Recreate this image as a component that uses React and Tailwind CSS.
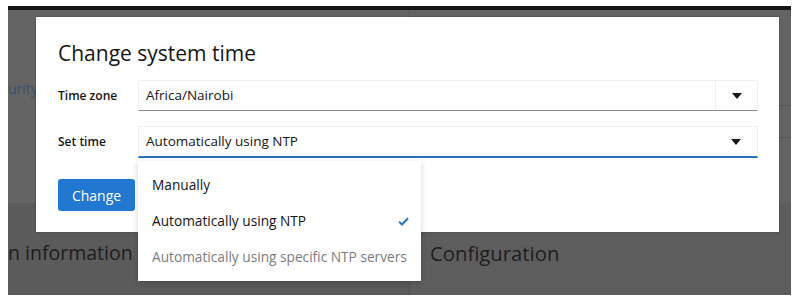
import React from "react";

const Caret = () => (
  <svg width="10" height="6" viewBox="0 0 10 6" className="block">
    <path d="M0 0 L10 0 L5 6 Z" fill="#151515" />
  </svg>
);

const Check = () => (
  <svg width="11" height="9" viewBox="0 0 11 9" className="block">
    <path d="M1 4.6 L4 7.5 L10 1.2" fill="none" stroke="#2b74c9" strokeWidth="2" />
  </svg>
);

export default function App() {
  const font = { fontFamily: '"Open Sans", "Noto Sans", sans-serif' };
  return (
    <div className="w-[799px] h-[300px] bg-white pt-[6px] pl-[8px]" style={font}>
      <div className="relative w-[783px] h-[289px] bg-[#606060] overflow-hidden flex flex-col">
        {/* top black bar */}
        <div className="h-[4px] bg-[#151515] shrink-0" />
        {/* background page content */}
        <div className="flex h-[193px] shrink-0">
          <div className="w-[400px] bg-[#646464] pt-[68px]">
            <div className="text-[14px] text-[#3a4f6b] whitespace-nowrap">urity</div>
          </div>
          <div className="w-[2px] bg-[#5e5e5e]" />
          <div className="flex-1 bg-[#636363] flex flex-col">
            <div className="h-[96px] border-b border-[#575757]" />
            <div className="h-[32px] border-b border-[#575757]" />
            <div className="flex-1" />
          </div>
        </div>
        <div className="flex flex-1 bg-[#5b5b5b]">
          <div className="w-[400px] pt-[38px]">
            <div className="text-[19.5px] leading-[24px] text-[#1d1d1d] whitespace-nowrap">n information</div>
          </div>
          <div className="w-[2px] bg-[#575757]" />
          <div className="flex-1 bg-[#5d5d5d] pt-[38px] pl-[20px]">
            <div className="text-[20.3px] leading-[24px] text-[#1d1d1d]">Configuration</div>
          </div>
        </div>

        {/* modal */}
        <div className="absolute left-[28px] top-[11px] w-[743px] h-[215px] bg-white shadow-[0_0_2px_rgba(0,0,0,0.3)] pl-[22px] pr-[21px] pt-[22px]">
          <div className="text-[21px] leading-[28px] text-[#151515] font-normal">Change system time</div>
          <div className="mt-[13px] flex items-center h-[31px]">
            <div className="w-[80px] text-[12px] font-semibold text-[#151515]">Time zone</div>
            <div className="flex-1 h-[31px] flex border border-[#f0f0f0] border-b-[#8a8d90]">
              <div className="flex-1 flex items-center pl-[7px] text-[13.5px] text-[#151515]">Africa/Nairobi</div>
              <div className="w-[42px] border-l border-[#f0f0f0] flex items-center justify-center">
                <Caret />
              </div>
            </div>
          </div>
          <div className="mt-[15px] flex items-center h-[32px]">
            <div className="w-[80px] text-[12px] font-semibold text-[#151515]">Set time</div>
            <div className="flex-1 h-[32px] flex border border-[#f0f0f0] border-b-2 border-b-[#2b6fc2]">
              <div className="flex-1 flex items-center pl-[7px] text-[13.5px] text-[#151515]">Automatically using NTP</div>
              <div className="w-[42px] flex items-center justify-center">
                <Caret />
              </div>
            </div>
          </div>
          <div className="mt-[21px]">
            <button className="w-[77px] h-[32px] rounded-[3px] bg-[#2277d0] text-white text-[14px]">Change</button>
          </div>
        </div>

        {/* dropdown menu */}
        <div className="absolute left-[130px] top-[155px] w-[283px] h-[120px] bg-white shadow-[0_2px_6px_rgba(0,0,0,0.18)] py-[6px]">
          <div className="h-[36px] flex items-center pl-[14px] text-[13.7px] text-[#151515]">Manually</div>
          <div className="h-[36px] flex items-center justify-between pl-[14px] pr-[12px] text-[13.7px] text-[#151515]">
            <span>Automatically using NTP</span>
            <Check />
          </div>
          <div className="h-[36px] flex items-center pl-[14px] text-[13.7px] text-[#7a7d80] whitespace-nowrap">Automatically using specific NTP servers</div>
        </div>
      </div>
    </div>
  );
}
